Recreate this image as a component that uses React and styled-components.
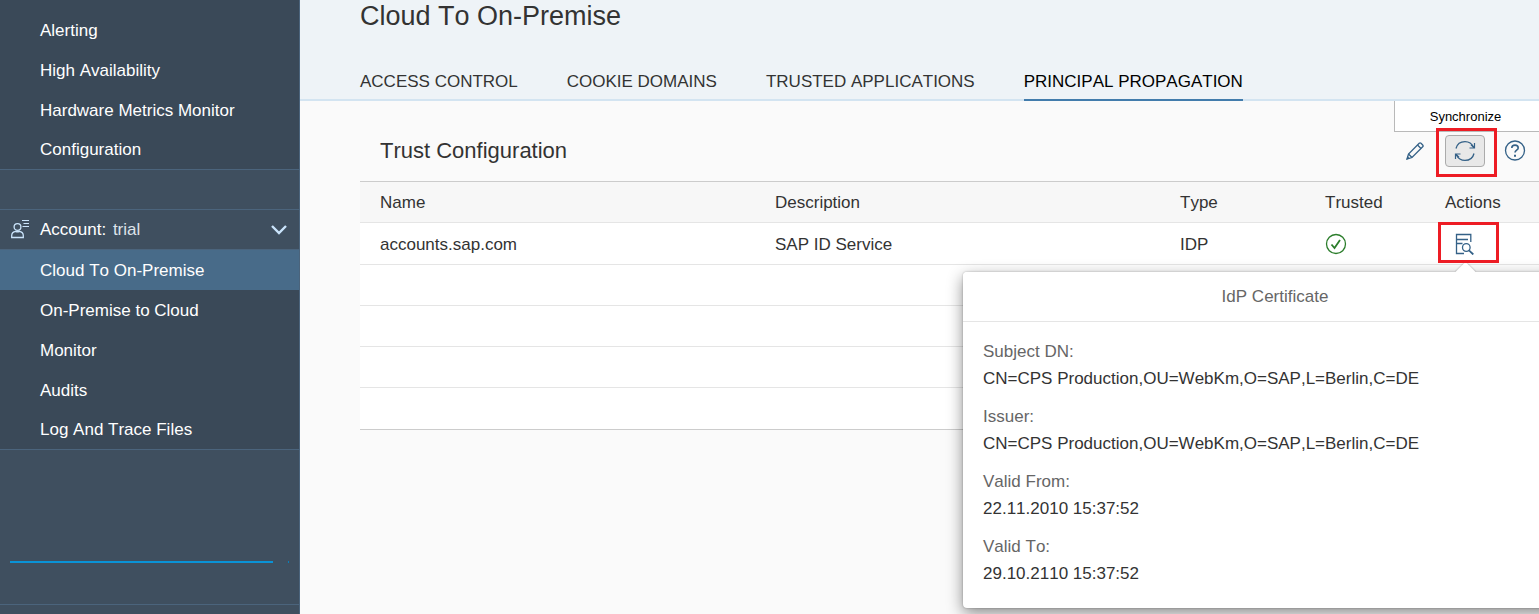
import React from 'react';
import styled, { createGlobalStyle } from 'styled-components';

const GlobalStyle = createGlobalStyle`
  * { box-sizing: border-box; }
  body {
    margin: 0;
    background: #fafafa;
    color: #333;
    font-family: "Liberation Sans", Arial, sans-serif;
    font-size: 17px;
    line-height: 20px;
    font-kerning: none;
  }
  button { font: inherit; color: inherit; font-kerning: none; }
`;

const Shell = styled.div`
  display: flex;
  min-height: 100vh;
  overflow: hidden;
`;

const Sidebar = styled.nav`
  flex: 0 0 300px;
  display: flex;
  flex-direction: column;
  background: #3f4f5f;
  border-right: 1px solid #4b647c;
  color: #fff;
`;

const NavList = styled.ul`
  list-style: none;
  margin: 0;
  padding: ${(p) => (p.$lead ? '10px 0 1px' : '0 0 1px')};
  background: #3a4958;
  border-bottom: 1px solid #4b647c;
  li:last-child a { height: 38px; }
`;

const NavLink = styled.a`
  display: flex;
  align-items: center;
  height: 40px;
  padding: 2px 0 0 40px;
  color: #fff;
  text-decoration: none;
  background: ${(p) => (p.$active ? '#486b89' : 'transparent')};
`;

const Spacer = styled.div`
  height: ${(p) => p.$height}px;
  border-bottom: 1px solid #4b647c;
`;

const AccountButton = styled.button`
  display: flex;
  align-items: center;
  height: 40px;
  padding: 0 12px 0 10px;
  border: 0;
  border-bottom: 1px solid #4b647c;
  background: transparent;
  text-align: left;
`;

const AccountName = styled.span`
  flex: 1;
  padding-left: 10px;
`;

const Trial = styled.span`
  margin-left: 2px;
  color: #dde3ea;
`;

const ProgressArea = styled.div`
  display: flex;
  align-items: flex-start;
  gap: 15px;
  height: 155px;
  padding: 111px 10px 0;
  border-bottom: 1px solid #4b647c;
`;

const ProgressLine = styled.div`
  flex: 1;
  height: 2px;
  background: #0a93d6;
`;

const ProgressEnd = styled.div`
  width: 1px;
  height: 2px;
  background: #0a7fb8;
`;

const Main = styled.main`
  flex: 1;
  min-width: 0;
`;

const PageHeader = styled.header`
  padding: 0 60px;
  background: #eef3f7;
  border-bottom: 2px solid #d3e4f1;
`;

const PageTitle = styled.h1`
  margin: 0;
  font-size: 27px;
  line-height: 32px;
  font-weight: 400;
`;

const Tabs = styled.div`
  display: flex;
  gap: 49px;
  padding-top: 31px;
`;

const Tab = styled.button`
  height: 38px;
  margin-bottom: -2px;
  padding: 2px 0 0;
  border: 0;
  border-bottom: 2px solid ${(p) => (p.$active ? '#427cac' : 'transparent')};
  background: none;
  color: ${(p) => (p.$active ? '#000' : '#333')};
  white-space: nowrap;
`;

const Content = styled.section`
  padding: 25px 0 0 60px;
`;

const Toolbar = styled.div`
  display: flex;
  align-items: center;
  gap: 10px;
  height: 49px;
  margin-bottom: 6px;
  padding: 0 4px 0 20px;
`;

const SectionTitle = styled.h2`
  flex: 1;
  margin: 0;
  font-size: 22px;
  line-height: 28px;
  font-weight: 400;
`;

const Anchor = styled.div`
  position: relative;
  width: 40px;
  height: 32px;
`;

const IconButton = styled.button`
  display: flex;
  align-items: center;
  justify-content: center;
  width: 40px;
  height: 32px;
  padding: 0;
  border: 1px solid ${(p) => (p.$pressed ? '#ababab' : 'transparent')};
  border-radius: 4px;
  background: ${(p) => (p.$pressed ? '#e8e8e8' : 'transparent')};
  color: #346187;
`;

const Highlight = styled.span`
  position: absolute;
  inset: ${(p) => p.$inset};
  border: 3px solid #ed1c24;
  pointer-events: none;
`;

const Tooltip = styled.div`
  position: absolute;
  left: -51px;
  bottom: 35px;
  width: 157px;
  height: 31px;
  padding-right: 14px;
  border: 1px solid #b9b9b9;
  border-top: 0;
  background: #fff;
  color: #000;
  font-size: 13px;
  line-height: 31px;
  text-align: center;
`;

const Table = styled.table`
  width: 100%;
  table-layout: fixed;
  border-collapse: separate;
  border-spacing: 0;
  border-top: 1px solid #ccc;
  border-bottom: 1px solid #ccc;
  background: #fff;
`;

const HeadCell = styled.th`
  width: ${(p) => (p.$width ? `${p.$width}px` : 'auto')};
  height: 41px;
  padding: 2px 0 0 10px;
  border-bottom: 1px solid #e5e5e5;
  background: #f7f7f7;
  font-weight: 400;
  text-align: left;
  &:first-child { padding-left: 20px; }
`;

const Cell = styled.td`
  height: 42px;
  padding: ${(p) => (p.$icon ? '0 0 0 10px' : '2px 0 0 10px')};
  border-bottom: 1px solid #e5e5e5;
  &:first-child { padding-left: 20px; }
  svg { display: block; }
`;

const EmptyCell = styled.td`
  height: 41px;
  padding: 0;
  border-bottom: 1px solid #e5e5e5;
  tr:last-child > & { border-bottom: 0; }
`;

const Popover = styled.div`
  position: absolute;
  top: 44px;
  left: -482px;
  width: 624px;
  border-radius: 4px;
  background: #fff;
  box-shadow: 0 0 2px rgba(0, 0, 0, 0.3), 0 5px 16px rgba(0, 0, 0, 0.45);
`;

const PopoverArrow = styled.span`
  position: absolute;
  top: -7px;
  left: 495px;
  width: 15px;
  height: 15px;
  background: #fff;
  box-shadow: -1px -1px 1px rgba(0, 0, 0, 0.12);
  transform: rotate(45deg);
`;

const PopoverTitle = styled.h3`
  position: relative;
  margin: 0;
  height: 50px;
  border-bottom: 1px solid #e5e5e5;
  border-radius: 4px 4px 0 0;
  background: #fff;
  color: #666;
  font-size: 17px;
  line-height: 49px;
  font-weight: 400;
  text-align: center;
`;

const Details = styled.dl`
  display: flex;
  flex-direction: column;
  gap: 11px;
  margin: 0;
  padding: 16px 20px 21px;
  line-height: 27px;
  dt { color: #666; }
  dd { margin: 0; }
`;

const Icon = ({ size = 20, width = 1.3, children, label }) => (
  <svg
    width={size}
    height={size}
    viewBox={`0 0 ${size} ${size}`}
    fill="none"
    stroke="currentColor"
    strokeWidth={width}
    role={label ? 'img' : undefined}
    aria-label={label}
    aria-hidden={label ? undefined : true}
  >
    {children}
  </svg>
);

const AccountIcon = () => (
  <Icon>
    <g stroke="#cae4fb">
      <circle cx="7.5" cy="7" r="3.4" />
      <path d="M1.700 17.500v-1.700c0-2.300 1.600-4.200 4-4.500 1.200.6 2.400.6 3.600 0 2.400.3 4 2.200 4 4.500v1.700z" />
      <path d="M12 .5h7M13.500 3.500h5.500M12.500 6.500h6.500" strokeWidth="1" />
    </g>
  </Icon>
);

const ChevronIcon = () => (
  <Icon size={16} width={2.4}>
    <path d="M1 4 8 11 15 4" stroke="#cae4fb" />
  </Icon>
);

const PencilIcon = () => (
  <Icon>
    <path d="M2 18 3.500 13 14.200 2.300c.6-.6 1.200-.6 1.800 0l1.700 1.700c.6.6.6 1.200 0 1.800L7 16.500z" />
    <path d="M12.500 4 16 7.500M3.500 13 7 16.500" />
    <path d="M1.500 18.500 2.500 15 5 17.500z" fill="currentColor" stroke="none" />
  </Icon>
);

const SyncIcon = () => (
  <Icon size={22}>
    <path d="M2 8.500C3 4.500 6.500 1.600 11 1.600c4 0 7 2.200 8.700 5.700" />
    <path d="M20.500 3v5H15.500M20.500 8 17 4.800" strokeWidth="1.200" />
    <path d="M20 13.500c-1 4-4.500 6.900-9 6.900-4 0-7-2.200-8.700-5.700" />
    <path d="M1.500 19v-5h5M1.500 14 5 17.200" strokeWidth="1.200" />
  </Icon>
);

const HelpIcon = () => (
  <Icon size={22}>
    <circle cx="11" cy="10.500" r="9.500" />
    <path d="M7.800 8C7.800 6 9.200 5.100 11 5.100s3.200 1 3.200 2.800c0 2.200-3.200 2.300-3.200 4.600" strokeWidth="1.600" />
    <path d="M11 14.700v2" strokeWidth="2" />
  </Icon>
);

const CheckIcon = () => (
  <Icon size={22} label="Trusted">
    <g stroke="#2b7d2b">
      <circle cx="11" cy="11" r="9.500" />
      <path d="M6.500 11.500 9.500 15 15 7" strokeWidth="1.800" />
    </g>
  </Icon>
);

const CertificateIcon = () => (
  <Icon size={22}>
    <path d="M10 20.500H2.500V1.500h14.300V9M2.500 6.500h11.500M2.500 10.500h6" />
    <circle cx="12.300" cy="14.500" r="3.800" />
    <path d="M15 17.300 19.300 21.500" strokeWidth="1.800" />
  </Icon>
);

const connectorLinks = ['Alerting', 'High Availability', 'Hardware Metrics Monitor', 'Configuration'];
const accountLinks = ['Cloud To On-Premise', 'On-Premise to Cloud', 'Monitor', 'Audits', 'Log And Trace Files'];
const tabs = ['ACCESS CONTROL', 'COOKIE DOMAINS', 'TRUSTED APPLICATIONS', 'PRINCIPAL PROPAGATION'];
const certificate = [
  ['Subject DN:', 'CN=CPS Production,OU=WebKm,O=SAP,L=Berlin,C=DE'],
  ['Issuer:', 'CN=CPS Production,OU=WebKm,O=SAP,L=Berlin,C=DE'],
  ['Valid From:', '22.11.2010 15:37:52'],
  ['Valid To:', '29.10.2110 15:37:52'],
];

const NavGroup = ({ items, lead, active }) => (
  <NavList $lead={lead}>
    {items.map((item) => (
      <li key={item}>
        <NavLink href="#" $active={item === active} aria-current={item === active ? 'page' : undefined}>
          {item}
        </NavLink>
      </li>
    ))}
  </NavList>
);

export default function App() {
  return (
    <Shell>
      <GlobalStyle />
      <Sidebar>
        <NavGroup items={connectorLinks} lead />
        <Spacer $height={40} />
        <AccountButton type="button" aria-expanded="true">
          <AccountIcon />
          <AccountName>
            Account: <Trial>trial</Trial>
          </AccountName>
          <ChevronIcon />
        </AccountButton>
        <NavGroup items={accountLinks} active="Cloud To On-Premise" />
        <ProgressArea>
          <ProgressLine />
          <ProgressEnd />
        </ProgressArea>
      </Sidebar>
      <Main>
        <PageHeader>
          <PageTitle>Cloud To On-Premise</PageTitle>
          <Tabs role="tablist">
            {tabs.map((tab, i) => (
              <Tab key={tab} type="button" role="tab" aria-selected={i === 3} $active={i === 3}>
                {tab}
              </Tab>
            ))}
          </Tabs>
        </PageHeader>
        <Content>
          <Toolbar>
            <SectionTitle>Trust Configuration</SectionTitle>
            <IconButton type="button" aria-label="Edit">
              <PencilIcon />
            </IconButton>
            <Anchor>
              <IconButton type="button" aria-label="Synchronize" $pressed>
                <SyncIcon />
              </IconButton>
              <Tooltip role="tooltip">Synchronize</Tooltip>
              <Highlight $inset="-7px -12px -10px -9px" />
            </Anchor>
            <IconButton type="button" aria-label="Help">
              <HelpIcon />
            </IconButton>
          </Toolbar>
          <Table>
            <thead>
              <tr>
                <HeadCell>Name</HeadCell>
                <HeadCell>Description</HeadCell>
                <HeadCell $width={145}>Type</HeadCell>
                <HeadCell $width={120}>Trusted</HeadCell>
                <HeadCell $width={104}>Actions</HeadCell>
              </tr>
            </thead>
            <tbody>
              <tr>
                <Cell>accounts.sap.com</Cell>
                <Cell>SAP ID Service</Cell>
                <Cell>IDP</Cell>
                <Cell $icon>
                  <CheckIcon />
                </Cell>
                <Cell $icon>
                  <Anchor>
                    <IconButton type="button" aria-label="Show certificate">
                      <CertificateIcon />
                    </IconButton>
                    <Popover role="dialog" aria-label="IdP Certificate">
                      <PopoverArrow />
                      <PopoverTitle>IdP Certificate</PopoverTitle>
                      <Details>
                        {certificate.map(([label, value]) => (
                          <div key={label}>
                            <dt>{label}</dt>
                            <dd>{value}</dd>
                          </div>
                        ))}
                      </Details>
                    </Popover>
                    <Highlight $inset="-6px -14px -3px -7px" />
                  </Anchor>
                </Cell>
              </tr>
              {[1, 2, 3, 4].map((row) => (
                <tr key={row}>
                  <EmptyCell colSpan={5} />
                </tr>
              ))}
            </tbody>
          </Table>
        </Content>
      </Main>
    </Shell>
  );
}
